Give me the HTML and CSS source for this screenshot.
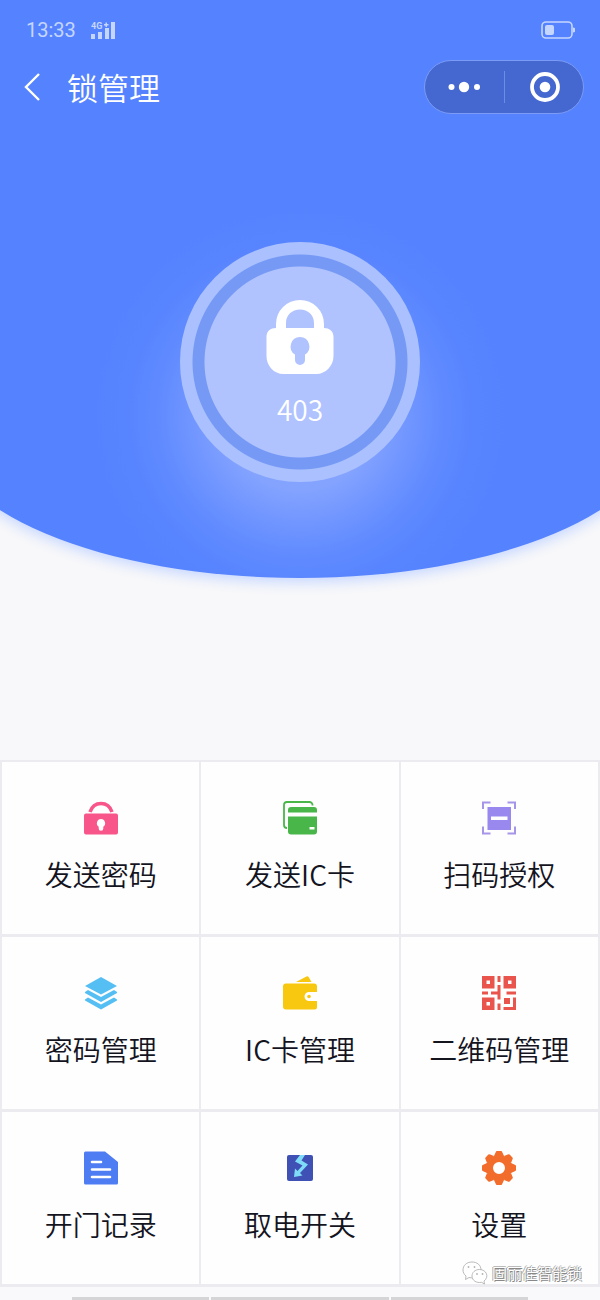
FILE: index.html
```html
<!DOCTYPE html>
<html lang="zh-CN">
<head>
<meta charset="utf-8">
<meta name="viewport" content="width=device-width, initial-scale=1">
<title>锁管理</title>
<link rel="stylesheet" href="styles.css">
</head>
<body>
<div class="screen">
  <header class="hero">
    <div class="status">
      <span class="clock">13:33</span>
      <svg class="signal" width="26" height="20" viewBox="0 0 26 20" role="img" aria-label="信号">
        <text class="network" x="0" y="9">4G</text>
        <path d="M0 14h4v5H0zM7 12h4v7H7zM14 8h4v11h-4zM20 2h4v17h-4zM13 4h1.500V2.500H16V4h1.500v1.500H16V7h-1.500V5.500H13z"/>
      </svg>
      <svg class="battery" width="34" height="18" viewBox="0 0 34 18" role="img" aria-label="电量">
        <rect x="1" y="1" width="30" height="16" rx="4" fill="none" stroke="currentColor" stroke-width="1.6"/>
        <rect x="4" y="4" width="9" height="10" rx="2" fill="currentColor"/>
        <path d="M32 6.500a2.500 2.500 0 0 1 0 5z" fill="currentColor"/>
      </svg>
    </div>
    <nav class="bar">
      <button class="back" type="button" aria-label="返回">
        <svg width="18" height="30" viewBox="0 0 18 30"><path d="M16 2L3 15l13 13" fill="none" stroke="currentColor" stroke-width="2.400"/></svg>
      </button>
      <h1 class="title">锁管理</h1>
      <div class="capsule">
        <button type="button" aria-label="更多">
          <svg width="34" height="12" viewBox="0 0 34 12" fill="currentColor"><circle cx="3.500" cy="6" r="3"/><circle cx="16" cy="6" r="5.200"/><circle cx="29" cy="6" r="3"/></svg>
        </button>
        <button type="button" aria-label="关闭">
          <svg width="32" height="30" viewBox="0 0 32 30"><circle cx="17" cy="15" r="13" fill="none" stroke="currentColor" stroke-width="3.800"/><circle cx="17" cy="15" r="5.300" fill="currentColor"/></svg>
        </button>
      </div>
    </nav>
    <button class="lock" type="button">
      <svg width="68" height="74" viewBox="0 0 68 74" fill="currentColor">
        <path fill-rule="evenodd" d="M10 28V24a24 24 0 0 1 48 0v4c5 0 9.500 3 9.500 9V56c0 10-8 18-17 18H17.500C8 74 .5 66 .5 56V37c0-6 4-9 9.500-9zM20 28H48V23c0-8-6-13.500-14-13.500S20 15 20 23zM34 37a9.500 9.500 0 0 0-5 17.500V60a5 5 0 0 0 10 0V54.500A9.500 9.500 0 0 0 34 37z"/>
      </svg>
      <span class="room">403</span>
    </button>
  </header>

  <main class="grid">
    <button class="cell" type="button">
      <svg class="icon" viewBox="0 0 34 34">
        <path d="M6 11C8 5 12 2.500 17 2.500S26 5 28 11" fill="none" stroke="#f8568a" stroke-width="3.600"/>
        <path fill="#f8568a" fill-rule="evenodd" d="M2 12.500h30a2 2 0 0 1 2 2V31.500a2 2 0 0 1-2 2H2a2 2 0 0 1-2-2V14.500a2 2 0 0 1 2-2zM17 18a4.300 4.300 0 0 0-2.300 7.800V27.500a2.300 2.300 0 0 0 4.600 0V25.800A4.300 4.300 0 0 0 17 18z"/>
      </svg>
      <span>发送密码</span>
    </button>
    <button class="cell" type="button">
      <svg class="icon" viewBox="0 0 34 34">
        <path d="M29.500 4.500V4a3 3 0 0 0-3-3H4a3 3 0 0 0-3 3V24a3 3 0 0 0 3 3" fill="none" stroke="#49b649" stroke-width="1.800"/>
        <path fill="#49b649" d="M5 11.500V9a3 3 0 0 1 3-3H31a3 3 0 0 1 3 3v2.500z"/>
        <path fill="#49b649" fill-rule="evenodd" d="M5 15.500H34V30.500a3 3 0 0 1-3 3H8a3 3 0 0 1-3-3zM26.500 26v2.500h5V26z"/>
      </svg>
      <span>发送IC卡</span>
    </button>
    <button class="cell" type="button">
      <svg class="icon" viewBox="0 0 34 34">
        <path d="M1 8V1.500h7.500M25.500 1.500H33V8M1 25.500V32.500h7.500M25.500 32.500H33V25.500" fill="none" stroke="#a795ea" stroke-width="2"/>
        <path fill="#9988ed" fill-rule="evenodd" d="M5.500 6H29v23H5.500zM9 15.500v3.500h16.500V15.500z"/>
      </svg>
      <span>扫码授权</span>
    </button>
    <button class="cell" type="button">
      <svg class="icon" viewBox="0 0 34 34">
        <path fill="#55bff4" d="M17 1l16 9-16 8.500L1 10zM1 16l3-2 13 7 13-7 3 2v1L17 26 1 17zM1 23.500l3-2 13 7 13-7 3 2v1L17 33.500 1 24.500z"/>
      </svg>
      <span>密码管理</span>
    </button>
    <button class="cell" type="button">
      <svg class="icon" viewBox="0 0 34 34">
        <path fill="#f8c70f" d="M13 6L23.500.5q1.500-.7 2.300.8L28.500 6zM3 7.500H31a3 3 0 0 1 3 3V16H26a4.500 4.500 0 0 0 0 9h8v6a2.500 2.500 0 0 1-2.500 2.500H3a3 3 0 0 1-3-3V10.500a3 3 0 0 1 3-3z"/>
        <circle cx="26" cy="20.500" r="1.800" fill="#f8c70f"/>
      </svg>
      <span>IC卡管理</span>
    </button>
    <button class="cell" type="button">
      <svg class="icon" viewBox="0 0 34 34" fill="#e9544c">
        <path fill-rule="evenodd" d="M0 0h12.500v12.500H0zM4.500 4.500v3.500h3.500V4.500zM21.500 0H34v12.500H21.500zM26 4.500v3.500h3.500V4.500zM0 21.500h12.500V34H0zM4.500 26v3.500h3.500V26z"/>
        <path d="M15.500 0h3v6h-3zM15.500 9h3v14.500h-3zM0 15.500h6v3H0zM9 15.500h7v3H9zM24.500 15.500H34v3h-9.500zM15.500 27.500h3V34h-3zM22 22h6v6h-6zM31 21.500h3V34H21.500v-3H31z"/>
      </svg>
      <span>二维码管理</span>
    </button>
    <button class="cell" type="button">
      <svg class="icon" viewBox="0 0 34 34">
        <path fill="#4e7df3" d="M1.500.5H21L34 11V32a1.500 1.500 0 0 1-1.500 1.500h-31A1.500 1.500 0 0 1 0 32V2A1.500 1.500 0 0 1 1.500.5z"/>
        <path d="M8 11h9M8 18.500h18M8 26h18" fill="none" stroke="#fff" stroke-width="2.600" stroke-linecap="round"/>
      </svg>
      <span>开门记录</span>
    </button>
    <button class="cell" type="button">
      <svg class="icon" viewBox="0 0 34 34">
        <rect x="4" y="4" width="26" height="26" rx="2" fill="#3f51b5"/>
        <path fill="#7fdcf8" d="M17 4h5l-3.500 5.500 6.500 4-8 8.500 2.500 2.500-8.500 1.500 1-8.500 2.500 2.500 5-5.500-7.500-4z"/>
      </svg>
      <span>取电开关</span>
    </button>
    <button class="cell" type="button">
      <svg class="icon" viewBox="-17 -17 34 34">
        <g fill="#f26d2b">
          <circle r="9.500" fill="none" stroke="#f26d2b" stroke-width="7"/>
          <path id="tooth" d="M-5-12l1.700-3.800Q-3-17-2-17H2Q3-17 3.300-15.800L5-12z"/>
          <use href="#tooth" transform="rotate(45)"/><use href="#tooth" transform="rotate(90)"/><use href="#tooth" transform="rotate(135)"/><use href="#tooth" transform="rotate(180)"/><use href="#tooth" transform="rotate(225)"/><use href="#tooth" transform="rotate(270)"/><use href="#tooth" transform="rotate(315)"/>
        </g>
      </svg>
      <span>设置</span>
    </button>
    <div class="watermark">
      <svg width="26" height="24" viewBox="0 0 26 24" fill="#fff" stroke="#aaa" stroke-width=".8">
        <path d="M10 1C4.500 1 1 4.500 1 9c0 2.500 1.300 4.500 3 6l-.5 3.500L7 16.500c7 1.500 12-2.500 12-7.500S15 1 10 1z"/>
        <path d="M17.500 8.500c-4.500 0-7.500 3-7.500 6.500 0 4.500 4.500 7.300 9.500 6.300l3 1.700-.5-3c5.500-4 2.500-11.500-4.500-11.500z"/>
        <path d="M6.500 5.500v1M12.500 5.500v1M15 12.500v1M20.500 12.500v1" stroke="#777" stroke-width="1.500"/>
      </svg>
      <span>固丽佳智能锁</span>
    </div>
  </main>

  <footer class="tabs"><i></i><i></i><i></i></footer>
</div>
</body>
</html>
```
FILE: styles.css
```css
* {
  box-sizing: border-box;
}

body {
  margin: 0;
  background: #f8f8fa;
  color: #14141e;
  font-family: "Noto Sans CJK SC", "Noto Sans", sans-serif;
  font-weight: 350;
}

button {
  margin: 0;
  padding: 0;
  border: 0;
  background: none;
  color: inherit;
  font: inherit;
  cursor: pointer;
}

svg {
  display: block;
  flex: none;
}

.screen {
  display: flex;
  flex-direction: column;
  min-height: 100vh;
  overflow: hidden;
}

.hero {
  position: relative;
  z-index: 0;
  display: flex;
  flex-direction: column;
  padding-bottom: 96px;
  margin-bottom: 182px;
  color: #fff;
}

.hero::before {
  content: "";
  position: absolute;
  z-index: -1;
  inset: 0 -10%;
  border-radius: 0 0 50% 50% / 0 0 152px 152px;
  background:
    radial-gradient(circle at 50% 415px, #86a5ff 0, #84a3ff 75px, rgba(122, 156, 255, .8) 105px, rgba(108, 147, 255, .5) 140px, rgba(95, 138, 255, .2) 175px, rgba(85, 131, 255, 0) 210px),
    #5583ff;
  box-shadow: 0 4px 14px #c3d5ff;
}

.status {
  display: flex;
  align-items: center;
  gap: 15px;
  height: 60px;
  padding: 0 25px 0 26px;
  color: #c5d6ff;
}

.clock {
  font: 20px/24px Roboto, sans-serif;
}

.signal {
  fill: currentColor;
}

.network {
  font: bold 9px Roboto, sans-serif;
}

.battery {
  margin-left: auto;
}

.bar {
  display: flex;
  align-items: center;
  height: 54px;
  padding: 0 16px 0 23px;
}

.title {
  margin: 0 0 0 26px;
  font-size: 31px;
  line-height: 46px;
  font-weight: 350;
}

.capsule {
  display: flex;
  width: 160px;
  height: 54px;
  margin-left: auto;
  border: 1px solid #7b9bf5;
  border-radius: 27px;
  background: #4468cf;
}

.capsule button {
  display: grid;
  flex: 1;
  place-items: center;
}

.capsule button + button {
  position: relative;
}

.capsule button + button::before {
  content: "";
  position: absolute;
  left: 0;
  top: 10px;
  bottom: 10px;
  width: 1px;
  background: #6c8ce6;
}

.lock {
  display: flex;
  flex-direction: column;
  align-items: center;
  align-self: center;
  width: 240px;
  height: 240px;
  margin-top: 128px;
  padding-top: 58px;
  gap: 15px;
  border-radius: 50%;
  background: radial-gradient(circle, #b0c3ff 95px, #7599f5 96px, #7599f5 107px, #abc1ff 108px);
}

.room {
  font-size: 28px;
  line-height: 40px;
}

.grid {
  position: relative;
  display: grid;
  grid-template-columns: repeat(3, 1fr);
  gap: 3px 2px;
  padding: 2px 2px 3px;
  background: #ecebf0;
}

.cell {
  display: flex;
  flex-direction: column;
  align-items: center;
  gap: 18px;
  padding: 39px 0;
  background: #fefefe;
  font-size: 28px;
  line-height: 42px;
}

.icon {
  width: 34px;
  height: 34px;
}

.watermark {
  position: absolute;
  right: 18px;
  bottom: 2px;
  display: flex;
  align-items: center;
  gap: 4px;
  color: #fff;
  font-size: 15px;
  line-height: 22px;
  text-shadow: 1px 1px 0 #888, -1px 0 0 #aaa, 0 -1px 0 #bbb;
}

.tabs {
  display: grid;
  grid-template-columns: 138fr 178fr 138fr;
  gap: 2px;
  padding: 10px 12% 0;
  background: #f9f8fb;
}

.tabs i {
  height: 4px;
  background: #d5d4d6;
}
```
